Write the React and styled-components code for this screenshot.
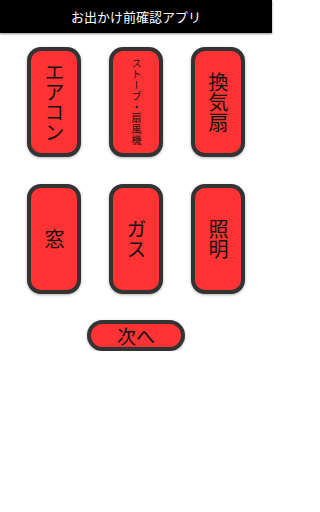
import React from "react";
import { styled, createGlobalStyle } from "styled-components";

const Global = createGlobalStyle`
  body {
    margin: 0;
    background: #fff;
    font-family: "Noto Sans CJK JP", "Noto Sans", sans-serif;
  }
`;

const Page = styled.div`
  width: 272px;
`;

const Header = styled.div`
  height: 33px;
  background: #000;
  color: #fff;
  display: flex;
  align-items: center;
  justify-content: center;
  font-size: 13px;
  box-shadow: 0 1px 2px rgba(0, 0, 0, 0.45);
`;

const Grid = styled.div`
  display: grid;
  grid-template-columns: repeat(3, 54px);
  grid-auto-rows: 110px;
  column-gap: 28px;
  row-gap: 27px;
  justify-content: center;
  padding-top: 14px;
`;

const Item = styled.button`
  box-sizing: border-box;
  width: 54px;
  height: 110px;
  padding: 0;
  border: 4px solid #333;
  border-radius: 14px;
  background: #ff3333;
  box-shadow: 0 1px 3px rgba(0, 0, 0, 0.3);
  display: flex;
  align-items: center;
  justify-content: center;
  font-family: inherit;
  color: #111;
  cursor: pointer;
`;

const Label = styled.span`
  display: block;
  writing-mode: vertical-rl;
  white-space: nowrap;
  font-family: "Noto Sans CJK JP", sans-serif;
  font-size: ${(p) => p.$size}px;
  letter-spacing: ${(p) => (p.$size < 15 ? "1px" : "0")};
  line-height: 1;
`;

const Footer = styled.div`
  display: flex;
  justify-content: center;
  padding-top: 26px;
`;

const Next = styled.button`
  box-sizing: border-box;
  width: 98px;
  height: 31px;
  padding: 0;
  border: 4px solid #333;
  border-radius: 16px;
  background: #ff3333;
  box-shadow: 0 1px 3px rgba(0, 0, 0, 0.3);
  font-family: inherit;
  font-size: 19px;
  line-height: 1;
  color: #111;
  cursor: pointer;
`;

const items = [
  { label: "エアコン", size: 20 },
  { label: "ストーブ・扇風機", size: 10 },
  { label: "換気扇", size: 20 },
  { label: "窓", size: 20 },
  { label: "ガス", size: 20 },
  { label: "照明", size: 20 },
];

export default function App() {
  return (
    <Page>
      <Global />
      <Header>お出かけ前確認アプリ</Header>
      <Grid>
        {items.map((item) => (
          <Item key={item.label}>
            <Label $size={item.size}>{item.label}</Label>
          </Item>
        ))}
      </Grid>
      <Footer>
        <Next>次へ</Next>
      </Footer>
    </Page>
  );
}
